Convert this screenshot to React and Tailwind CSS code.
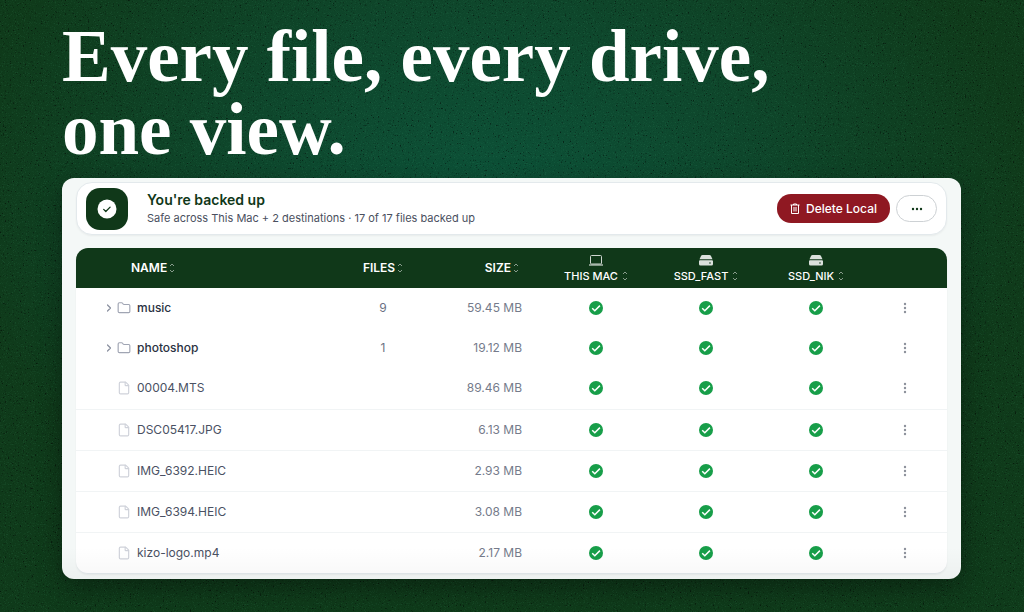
import React, { useState } from "react";
import { ChevronRight, File, Folder } from "lucide-react";

const files = [
  { name: "music", type: "folder", count: 9, size: "59.45 MB" },
  { name: "photoshop", type: "folder", count: 1, size: "19.12 MB" },
  { name: "00004.MTS", type: "file", size: "89.46 MB" },
  { name: "DSC05417.JPG", type: "file", size: "6.13 MB" },
  { name: "IMG_6392.HEIC", type: "file", size: "2.93 MB" },
  { name: "IMG_6394.HEIC", type: "file", size: "3.08 MB" },
  { name: "kizo-logo.mp4", type: "file", size: "2.17 MB" },
];

const drives = [
  { id: "mac", label: "THIS MAC", icon: "laptop" },
  { id: "fast", label: "SSD_FAST", icon: "drive" },
  { id: "nik", label: "SSD_NIK", icon: "drive" },
];

const Grain = () => (
  <svg
    className="pointer-events-none absolute inset-0 h-full w-full"
    aria-hidden="true"
  >
    <filter id="specks">
      <feTurbulence type="fractalNoise" baseFrequency="0.6" numOctaves="2" seed="4" />
      <feColorMatrix values="0 0 0 0 0  0 0 0 0 0  0 0 0 0 0  6 0 0 0 -3.9" />
    </filter>
    <filter id="dust">
      <feTurbulence type="fractalNoise" baseFrequency="0.9" numOctaves="2" seed="9" />
      <feColorMatrix values="0 0 0 0 0.1  0 0 0 0 0.6  0 0 0 0 0.3  0 4 0 0 -2.2" />
    </filter>
    <rect width="100%" height="100%" filter="url(#specks)" opacity="0.5" />
    <rect width="100%" height="100%" filter="url(#dust)" opacity="0.1" />
  </svg>
);

const SortArrows = () => (
  <svg
    viewBox="0 0 6 10"
    className="h-2.5 w-1.5 shrink-0 opacity-50"
    fill="none"
    stroke="currentColor"
    aria-hidden="true"
  >
    <path d="M1 3 3 1l2 2M1 7l2 2 2-2" />
  </svg>
);

const LaptopIcon = () => (
  <svg viewBox="0 0 14 12" className="h-3 w-3.5 opacity-80" fill="none" aria-hidden="true">
    <rect x="1.5" y="1.5" width="11" height="8.5" rx="1" stroke="currentColor" />
    <path d="M0 11h14" stroke="currentColor" strokeWidth="1.2" />
  </svg>
);

const DriveIcon = () => (
  <svg viewBox="0 0 14 12" className="h-3 w-3.5 opacity-85" aria-hidden="true">
    <path
      fill="currentColor"
      d="M3.6 1h6.800c.8 0 1.300.3 1.600 1L13.500 5.300H.5L2 2c.3-.7.8-1 1.600-1Z"
    />
    <path
      fill="currentColor"
      fillRule="evenodd"
      d="M1 6.300h12a1 1 0 0 1 1 1V10a1.500 1.500 0 0 1-1.500 1.500h-11A1.500 1.500 0 0 1 0 10V7.300a1 1 0 0 1 1-1Zm10 1.900a.8.8 0 1 0 0 1.600.8.8 0 0 0 0-1.600Z"
    />
  </svg>
);

const CheckBadge = () => (
  <svg viewBox="0 0 14 14" className="mx-auto h-3.5 w-3.5" role="img" aria-label="Backed up">
    <circle cx="7" cy="7" r="7" fill="#179e49" />
    <path
      d="m3.200 7.200 2.600 2.500 5.100-5.100"
      fill="none"
      stroke="#fff"
      strokeWidth="1.500"
    />
  </svg>
);

const TrashIcon = () => (
  <svg
    viewBox="0 0 10 12"
    className="h-3 w-2.5"
    fill="none"
    stroke="currentColor"
    aria-hidden="true"
  >
    <path d="M.5 2h9M3.500 2V1h3v1M1.500 2v8.500h7V2M4 4v4.500M6 4v4.500" />
  </svg>
);

const SortButton = ({ label, small, onClick }) => (
  <button
    type="button"
    onClick={onClick}
    className={
      small
        ? "flex items-center gap-1 text-[11px] leading-3 font-medium"
        : "flex items-center gap-0.5 text-xs font-semibold"
    }
  >
    {label}
    <SortArrows />
  </button>
);

const App = () => {
  const [sort, setSort] = useState(null);

  const sizeOf = (file) => parseFloat(file.size);
  const rows = [...files];
  if (sort === "name") rows.sort((a, b) => a.name.localeCompare(b.name));
  if (sort === "files") rows.sort((a, b) => (b.count || 0) - (a.count || 0));
  if (sort === "size") rows.sort((a, b) => sizeOf(b) - sizeOf(a));

  return (
    <div className="relative min-h-screen overflow-hidden bg-[#0f3a1a] bg-[radial-gradient(ellipse_52%_62%_at_48%_32%,#0c5138_0%,#0e462b_50%,#0f3a1a_100%)] pt-5 pr-[63px] pb-8 pl-[62px] font-['Inter',sans-serif]">
      <Grain />

      <div className="relative">
        <h1 className="font-['Liberation_Serif',serif] text-[73px] leading-[73px] font-bold text-white">
          Every file, every drive,
          <br />
          one view.
        </h1>

        <main className="relative mt-3 overflow-hidden rounded-xl bg-[#f4f8f7] px-3.5 pt-1 pb-[5px] shadow-[0_8px_24px_rgba(0,0,0,0.35)]">
          {/* STATUS */}
          <section className="flex h-[53px] items-center rounded-2xl border border-[#e3e9ec] bg-white px-[9px] shadow-xs">
            <div className="flex h-[42px] w-[42px] items-center justify-center rounded-[14px] bg-[#103819]">
              <svg viewBox="0 0 20 20" className="h-5 w-5" aria-hidden="true">
                <circle cx="10" cy="10" r="9.500" fill="#fff" />
                <path
                  d="m6.700 10.400 2.100 2.100 4.300-4.400"
                  fill="none"
                  stroke="#103819"
                  strokeWidth="1.300"
                  strokeLinecap="round"
                  strokeLinejoin="round"
                />
              </svg>
            </div>
            <div className="ml-[19px] flex-1">
              <h2 className="text-sm leading-[18px] font-semibold text-[#103819]">
                You're backed up
              </h2>
              <p className="text-[11px] leading-[18px] text-[#4a5060]">
                Safe across This Mac + 2 destinations · 17 of 17 files backed up
              </p>
            </div>
            <button
              type="button"
              className="flex h-[29px] items-center gap-1.5 rounded-[14px] bg-[#8f1822] px-[13px] text-xs font-medium text-white"
            >
              <TrashIcon />
              Delete Local
            </button>
            <button
              type="button"
              aria-label="More actions"
              className="ml-1.5 flex h-[27px] w-[41px] items-center justify-center rounded-[14px] border border-[#cdd1d4] bg-white text-[#103819]"
            >
              <svg viewBox="0 0 12 4" className="h-1 w-3" fill="currentColor" aria-hidden="true">
                <circle cx="2" cy="2" r="1.200" />
                <circle cx="6" cy="2" r="1.200" />
                <circle cx="10" cy="2" r="1.200" />
              </svg>
            </button>
          </section>

          {/* FILES */}
          <div className="mt-[13px] overflow-hidden rounded-xl border-b border-[#e3e9ec] bg-white shadow-xs">
            <table className="w-full table-fixed">
              <colgroup>
                <col />
                <col className="w-[110px]" />
                <col className="w-[103px]" />
                <col className="w-[110px]" />
                <col className="w-[110px]" />
                <col className="w-[110px]" />
                <col className="w-[76px]" />
              </colgroup>
              <thead className="bg-[#103819] text-white">
                <tr className="h-10">
                  <th className="pl-[55px]">
                    <SortButton label="NAME" onClick={() => setSort("name")} />
                  </th>
                  <th>
                    <div className="flex justify-center">
                      <SortButton label="FILES" onClick={() => setSort("files")} />
                    </div>
                  </th>
                  <th className="pr-[22px]">
                    <div className="flex justify-end">
                      <SortButton label="SIZE" onClick={() => setSort("size")} />
                    </div>
                  </th>
                  {drives.map((drive) => (
                    <th key={drive.id}>
                      <div className="flex flex-col items-center gap-1">
                        {drive.icon === "laptop" ? <LaptopIcon /> : <DriveIcon />}
                        <SortButton small label={drive.label} />
                      </div>
                    </th>
                  ))}
                  <th aria-label="Actions" />
                </tr>
              </thead>
              <tbody>
                {rows.map((file) => (
                  <tr
                    key={file.name}
                    className={
                      file.type === "folder"
                        ? "h-10"
                        : "h-[41px] border-b border-[#f1f4f5] last:border-b-0"
                    }
                  >
                    <td className="pl-[27px]">
                      {file.type === "folder" ? (
                        <div className="flex items-center text-xs font-medium text-[#2a3142]">
                          <button type="button" aria-label={`Open ${file.name}`}>
                            <ChevronRight className="h-3 w-3 text-[#8b91a0]" strokeWidth={2.5} />
                          </button>
                          <Folder
                            className="mr-1.5 ml-0.5 h-3.5 w-3.5 text-[#a0a5b3]"
                            strokeWidth={2}
                          />
                          {file.name}
                        </div>
                      ) : (
                        <div className="flex items-center pl-3.5 text-xs text-[#4a5163]">
                          <File
                            className="mr-1.5 h-3.5 w-3.5 text-[#cfd2da]"
                            strokeWidth={2}
                          />
                          {file.name}
                        </div>
                      )}
                    </td>
                    <td className="text-center text-xs text-[#6b7183]">{file.count}</td>
                    <td className="pr-[19px] text-right text-xs text-[#757b8b]">
                      {file.size}
                    </td>
                    {drives.map((drive) => (
                      <td key={drive.id}>
                        <CheckBadge />
                      </td>
                    ))}
                    <td className="pr-2">
                      <button
                        type="button"
                        aria-label={`Actions for ${file.name}`}
                        className="mx-auto block"
                      >
                        <svg
                          viewBox="0 0 4 12"
                          className="h-3 w-1 text-[#8d919b]"
                          fill="currentColor"
                          aria-hidden="true"
                        >
                          <circle cx="2" cy="2" r="1.200" />
                          <circle cx="2" cy="6" r="1.200" />
                          <circle cx="2" cy="10" r="1.200" />
                        </svg>
                      </button>
                    </td>
                  </tr>
                ))}
              </tbody>
            </table>
          </div>

          <div className="pointer-events-none absolute inset-x-0 bottom-0 h-8 bg-gradient-to-t from-black/3 to-transparent" />
        </main>
      </div>
    </div>
  );
};

export default App;
